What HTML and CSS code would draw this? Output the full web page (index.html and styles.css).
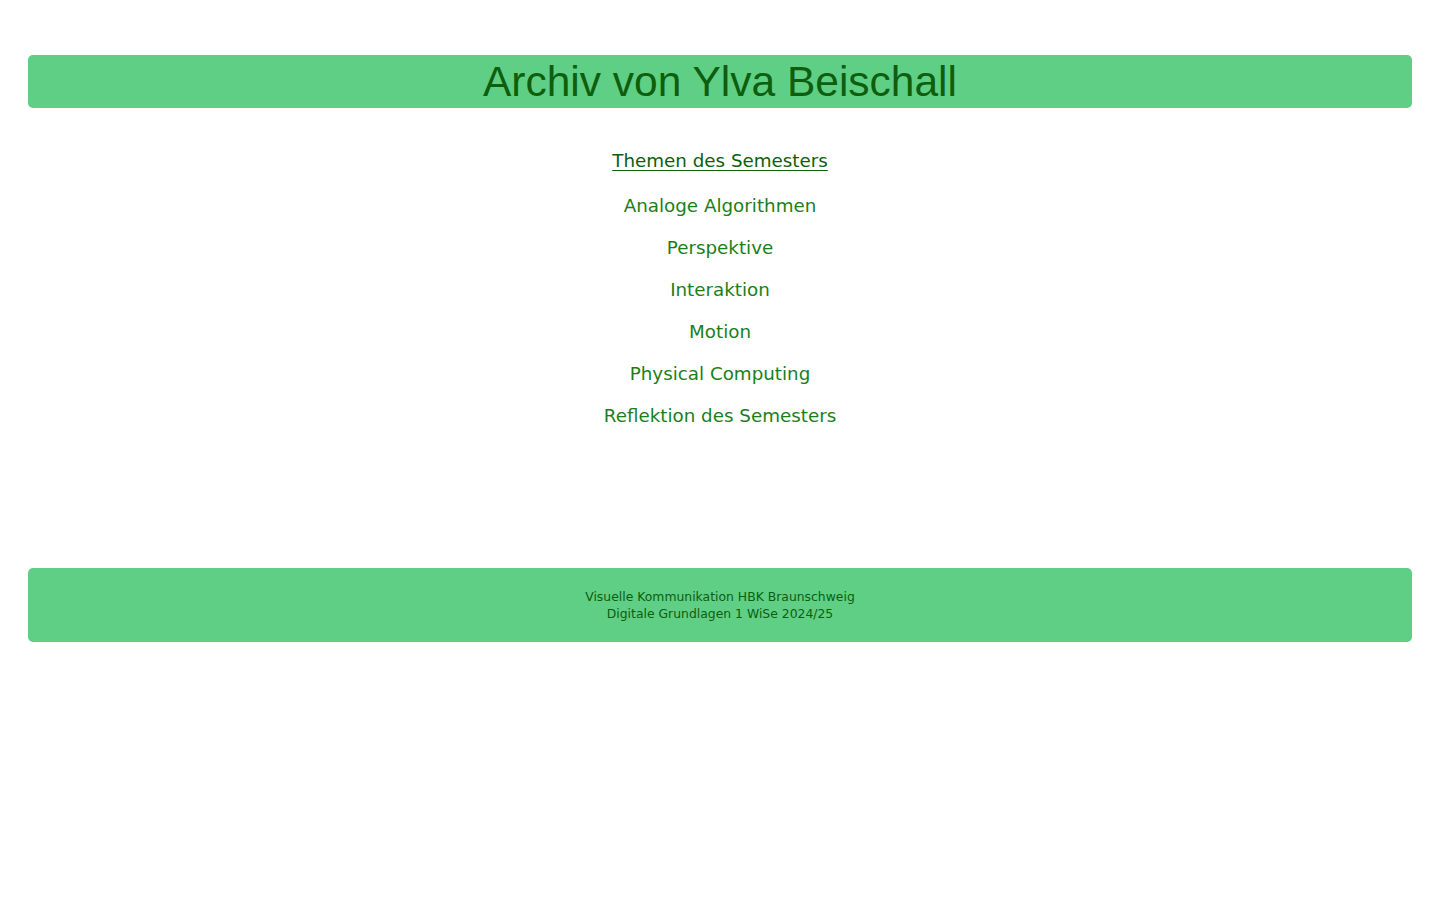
FILE: index.html
```html
<!DOCTYPE html>
<html lang="de">
<head>
<meta charset="utf-8">
<title>Archiv von Ylva Beischall</title>
<link rel="stylesheet" href="styles.css">
</head>
<body>
<header class="banner">
  <h1 class="title">Archiv von Ylva Beischall</h1>
</header>
<nav class="menu">
  <a class="menu-head" href="#">Themen des Semesters</a>
  <a class="menu-item" href="#">Analoge Algorithmen</a>
  <a class="menu-item" href="#">Perspektive</a>
  <a class="menu-item" href="#">Interaktion</a>
  <a class="menu-item" href="#">Motion</a>
  <a class="menu-item" href="#">Physical Computing</a>
  <a class="menu-item" href="#">Reflektion des Semesters</a>
</nav>
<footer class="footer">
  <p class="footer-line">Visuelle Kommunikation HBK Braunschweig</p>
  <p class="footer-line">Digitale Grundlagen 1 WiSe 2024/25</p>
</footer>
</body>
</html>
```

FILE: styles.css
```css
html, body {
  margin: 0;
  padding: 0;
  background: #ffffff;
}

body {
  padding: 55px 28px 0;
  font-family: "DejaVu Sans", "Liberation Sans", sans-serif;
}

.banner {
  background: #5fcf85;
  border-radius: 5px;
  height: 53px;
  display: flex;
  align-items: center;
  justify-content: center;
}

.title {
  margin: 0;
  font-family: "Liberation Sans", Arial, sans-serif;
  font-weight: normal;
  font-size: 42.5px;
  line-height: 53px;
  color: #0d5e0d;
}

.menu {
  display: flex;
  flex-direction: column;
  align-items: center;
  padding-top: 35px;
  height: 460px;
  box-sizing: border-box;
}

.menu a {
  font-size: 18.3px;
  line-height: 42px;
  text-decoration: none;
  color: #1a7f1a;
}

.menu .menu-head {
  color: #0d5e0d;
  text-decoration: underline;
  text-underline-offset: 3px;
  line-height: 36px;
  margin-bottom: 6px;
}

.footer {
  background: #5fcf85;
  border-radius: 5px;
  height: 74px;
  display: flex;
  flex-direction: column;
  align-items: center;
  justify-content: center;
  color: #0d5e0d;
}

.footer-line {
  margin: 0;
  font-size: 12.4px;
  line-height: 17px;
}
```
